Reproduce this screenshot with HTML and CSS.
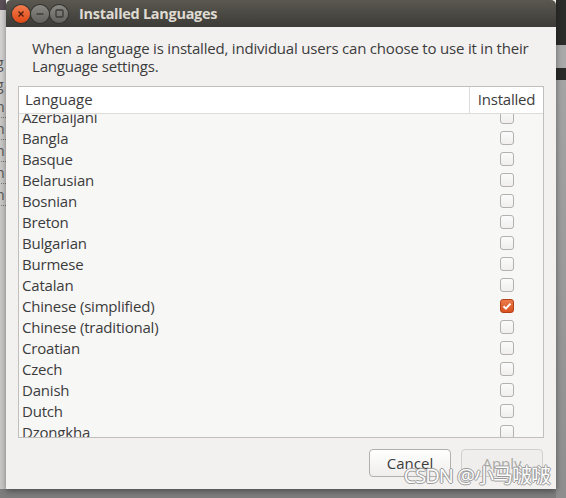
FILE: index.html
```html
<!DOCTYPE html>
<html lang="en">
<head>
  <meta charset="UTF-8">
  <title>Installed Languages</title>
  <link rel="stylesheet" href="styles.css">
</head>
<body>
  <div class="desktop">
    <!-- 左侧背景窗口 -->
    <div class="bg-left">
      <span class="frag">g</span>
      <span class="frag">g</span>
      <span class="frag dots">n</span>
      <span class="frag dots">n</span>
      <span class="frag dots">n</span>
      <span class="frag dots">n</span>
      <span class="frag dots">n</span>
    </div>

    <!-- 对话框 -->
    <div class="dialog">
      <div class="titlebar">
        <span class="tbtn close">
          <svg width="8" height="8" viewBox="0 0 8 8"><path d="M1.5 1.5l5 5M6.5 1.5l-5 5" stroke="#4a1b0c" stroke-width="1.3"/></svg>
        </span>
        <span class="tbtn">
          <svg width="8" height="8" viewBox="0 0 8 8"><path d="M0.5 4h7" stroke="#3a3a36" stroke-width="1.4"/></svg>
        </span>
        <span class="tbtn">
          <svg width="9" height="9" viewBox="0 0 9 9"><rect x="1" y="1" width="7" height="7" rx="1" fill="none" stroke="#3a3a36" stroke-width="1.3"/></svg>
        </span>
        <span class="title">Installed Languages</span>
      </div>

      <div class="content">
        <p class="intro">When a language is installed, individual users can choose to use it in their Language settings.</p>

        <div class="tree">
          <div class="tree-head">
            <div class="col-lang">Language</div>
            <div class="col-inst">Installed</div>
          </div>
          <div class="tree-body">
            <ul class="rows">
              <li><span>Azerbaijani</span><i class="check"></i></li>
              <li><span>Bangla</span><i class="check"></i></li>
              <li><span>Basque</span><i class="check"></i></li>
              <li><span>Belarusian</span><i class="check"></i></li>
              <li><span>Bosnian</span><i class="check"></i></li>
              <li><span>Breton</span><i class="check"></i></li>
              <li><span>Bulgarian</span><i class="check"></i></li>
              <li><span>Burmese</span><i class="check"></i></li>
              <li><span>Catalan</span><i class="check"></i></li>
              <li><span>Chinese (simplified)</span><i class="check on"><svg width="14" height="14" viewBox="0 0 14 14"><path d="M3.5 7.2l2.4 2.4 4.6-5" fill="none" stroke="#fff" stroke-width="2"/></svg></i></li>
              <li><span>Chinese (traditional)</span><i class="check"></i></li>
              <li><span>Croatian</span><i class="check"></i></li>
              <li><span>Czech</span><i class="check"></i></li>
              <li><span>Danish</span><i class="check"></i></li>
              <li><span>Dutch</span><i class="check"></i></li>
              <li><span>Dzongkha</span><i class="check"></i></li>
            </ul>
          </div>
        </div>

        <div class="actions">
          <a href="javascript:;" class="btn">Cancel</a>
          <a href="javascript:;" class="btn disabled">Apply</a>
        </div>
      </div>
      <div class="watermark">CSDN @小马啵啵</div>
    </div>

    <div class="bg-right"></div>
  </div>
</body>
</html>
```

FILE: styles.css
```css
/* 清除默认样式 */
* {
  margin: 0;
  padding: 0;
  box-sizing: border-box;
}
ul,ol {
  list-style: none;
}
body {
  width: 566px;
  height: 498px;
  overflow: hidden;
  background: #8c8c8c;
  font-family: "Open Sans", "Noto Sans CJK SC", sans-serif;
  color: #3c3c3c;
}
.desktop {
  display: flex;
  height: 498px;
  background: linear-gradient(#8f8f8f, #7d7d7d);
}
/* 背景窗口 */
.bg-left {
  width: 6px;
  height: 489px;
  display: flex;
  flex-direction: column;
  background: linear-gradient(#5b4f58 0, #5b4f58 10px, #d4d3d2 10px, #d4d3d2 86px, #c9c8c6 86px);
  overflow: hidden;
  padding-top: 52px;
  font-size: 14px;
  color: #555;
}
.bg-left .frag {
  height: 22px;
  line-height: 22px;
  margin-left: -4px;
}
.bg-left .dots {
  border-bottom: 1px dotted #777;
}
.bg-right {
  width: 10px;
  height: 498px;
  background: linear-gradient(#2c2c2b 0, #2c2c2b 45px, #a9a9a9 45px, #a9a9a9 68px, #2a2a29 68px, #2a2a29 80px, #a4a4a4 80px, #8e8e8e 498px);
}
/* 对话框 */
.dialog {
  position: relative;
  width: 550px;
  height: 489px;
  display: flex;
  flex-direction: column;
  background-color: #f2f1f0;
  box-shadow: 0 2px 6px rgba(0,0,0,0.4);
}
.titlebar {
  height: 27px;
  display: flex;
  align-items: center;
  padding-left: 6px;
  gap: 1px;
  border-radius: 5px 5px 0 0;
  background: linear-gradient(#5a5850, #3c3b37);
}
.tbtn {
  width: 18px;
  height: 18px;
  display: flex;
  align-items: center;
  justify-content: center;
  border-radius: 50%;
  background: linear-gradient(#8a8984, #62615c);
  box-shadow: 0 0 0 1px #333230;
}
.tbtn.close {
  background: linear-gradient(#f37c4f, #dd4814);
}
.title {
  margin-left: 10px;
  font-size: 14.5px;
  font-weight: bold;
  letter-spacing: -0.3px;
  color: #dfdbd2;
}
.content {
  flex: 1;
  display: flex;
  flex-direction: column;
  padding: 12px 12px 0 12px;
}
.intro {
  padding-left: 14px;
  font-size: 15px;
  line-height: 18px;
  letter-spacing: -0.2px;
  margin-bottom: 11px;
}
/* 列表 */
.tree {
  border: 1px solid #c1bfbb;
  background-color: #f7f7f6;
}
.tree-head {
  display: flex;
  height: 27px;
  background-color: #fff;
  border-bottom: 1px solid #dedcda;
  font-size: 15px;
  line-height: 25px;
}
.col-lang {
  flex: 1;
  padding-left: 6px;
  border-right: 1px solid #dedcda;
}
.col-inst {
  width: 73px;
  text-align: center;
  letter-spacing: -0.2px;
}
.tree-body {
  height: 323px;
  overflow: hidden;
}
.rows {
  margin-top: -8px;
}
.rows li {
  display: flex;
  align-items: center;
  justify-content: space-between;
  height: 21px;
  padding: 0 29px 0 3px;
  font-size: 15px;
  letter-spacing: -0.2px;
}
.check {
  width: 14px;
  height: 14px;
  display: flex;
  border: 1px solid #b3b1ad;
  border-radius: 3px;
  background: linear-gradient(#fbfbfb, #f0efee);
}
.check.on {
  border-color: #b34116;
  background: linear-gradient(#ec7a4b, #d9531f);
}
.check.on svg {
  margin: -1px;
}
/* 按钮 */
.actions {
  display: flex;
  justify-content: flex-end;
  gap: 10px;
  padding-top: 11px;
  padding-right: 1px;
}
.btn {
  width: 82px;
  height: 28px;
  border: 1px solid #b2b0ac;
  border-radius: 4px;
  background: linear-gradient(#ffffff, #efeeec);
  font-size: 15px;
  line-height: 26px;
  text-align: center;
  color: #3c3c3c;
  text-decoration: none;
}
.btn.disabled {
  border-color: #d2d0cd;
  background: #efeeec;
  color: #a9a8a5;
}
/* 水印 */
.watermark {
  position: absolute;
  right: 6px;
  bottom: 0;
  font-size: 20px;
  line-height: 26px;
  letter-spacing: -1px;
  color: #fdfdfd;
  text-shadow: 1px 0 0 #9a9a9a, -1px 0 0 #9a9a9a, 0 1px 0 #9a9a9a, 0 -1px 0 #9a9a9a;
}
```
